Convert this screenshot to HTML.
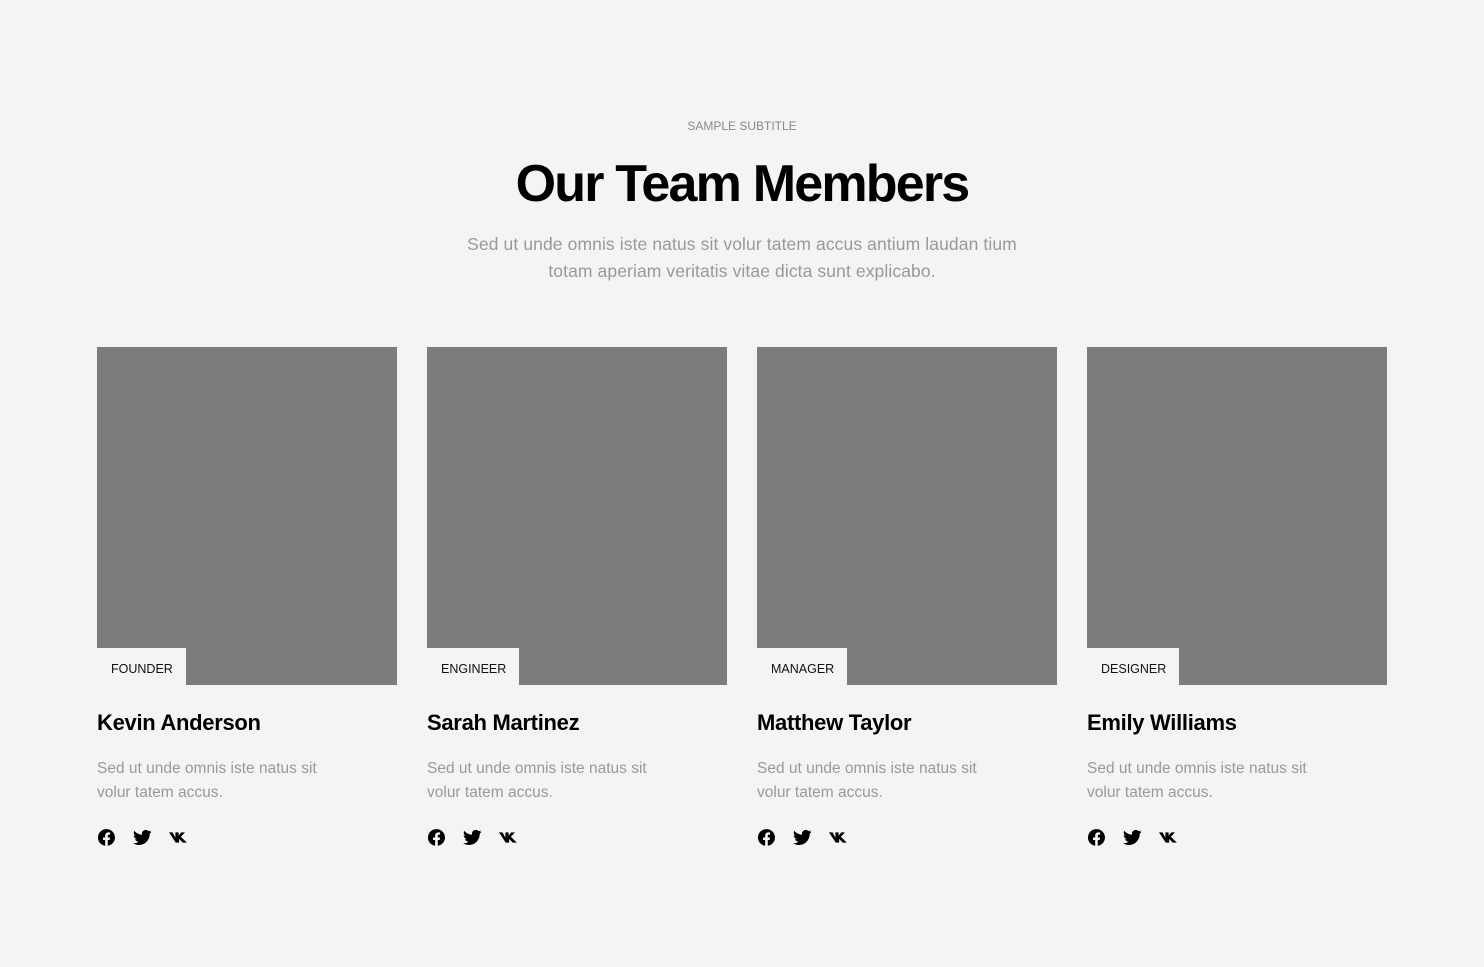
<!DOCTYPE html>
<html><head><meta charset="utf-8"><style>
*{margin:0;padding:0;box-sizing:border-box}
body{width:1484px;height:967px;background:#f4f4f4;font-family:"Liberation Sans",sans-serif;position:relative;overflow:hidden}
.sub{position:absolute;top:119px;left:0;width:1484px;text-align:center;font-size:12px;color:#888}
h1{position:absolute;top:152px;left:0;width:1484px;text-align:center;font-size:52px;font-weight:700;letter-spacing:-1.8px;color:#000;line-height:64px}
.lead{position:absolute;top:231px;left:0;width:1484px;text-align:center;font-size:17.5px;letter-spacing:0.1px;line-height:27px;color:#999}
.card{position:absolute;top:347px;width:300px}
.img{height:338px;background:#7c7c7d;position:relative}
.tag{position:absolute;left:0;bottom:0;height:37px;background:#f4f4f4;padding:0 13px 0 14px;font-size:12.5px;line-height:42px;color:#111}
.name{margin-top:24px;font-size:22px;font-weight:700;letter-spacing:-0.3px;color:#000;line-height:28px}
.desc{margin-top:20px;font-size:15.5px;line-height:24px;color:#999;width:250px}
.icons{margin-top:23px;display:flex;gap:17px}
.icons svg{width:19px;height:19px}
</style></head><body>
<div class="sub">SAMPLE SUBTITLE</div>
<h1>Our Team Members</h1>
<div class="lead">Sed ut unde omnis iste natus sit volur tatem accus antium laudan tium<br>totam aperiam veritatis vitae dicta sunt explicabo.</div>

<div class="card" style="left:97px"><div class="img"><div class="tag">FOUNDER</div></div><div class="name">Kevin Anderson</div><div class="desc">Sed ut unde omnis iste natus sit volur tatem accus.</div><div class="icons ic"></div></div>
<div class="card" style="left:427px"><div class="img"><div class="tag">ENGINEER</div></div><div class="name">Sarah Martinez</div><div class="desc">Sed ut unde omnis iste natus sit volur tatem accus.</div><div class="icons ic"></div></div>
<div class="card" style="left:757px"><div class="img"><div class="tag">MANAGER</div></div><div class="name">Matthew Taylor</div><div class="desc">Sed ut unde omnis iste natus sit volur tatem accus.</div><div class="icons ic"></div></div>
<div class="card" style="left:1087px"><div class="img"><div class="tag">DESIGNER</div></div><div class="name">Emily Williams</div><div class="desc">Sed ut unde omnis iste natus sit volur tatem accus.</div><div class="icons ic"></div></div>
<script>
var s='<svg viewBox="0 0 24 24"><path fill="#000" d="M12 1.5a10.5 10.5 0 0 0-1.7 20.9v-7.3H7.6V12h2.7V9.7c0-2.6 1.6-4.1 4-4.1 1.1 0 2.3.2 2.3.2v2.6h-1.3c-1.3 0-1.7.8-1.7 1.6V12h2.9l-.5 3.1h-2.4v7.3A10.5 10.5 0 0 0 12 1.5z"/></svg>'+
'<svg viewBox="0 0 24 24"><path fill="#000" d="M23.5 4.6c-.9.4-1.8.6-2.8.8 1-.6 1.7-1.5 2.1-2.6-.9.6-2 1-3.1 1.2a4.8 4.8 0 0 0-8.2 4.4C7.5 8.2 4 6.3 1.600 3.4a4.8 4.8 0 0 0 1.5 6.4c-.8 0-1.5-.2-2.2-.6 0 2.3 1.6 4.3 3.9 4.700-.7.2-1.5.2-2.2.1.6 1.9 2.4 3.3 4.5 3.3A9.6 9.6 0 0 1 0 19.3a13.6 13.6 0 0 0 7.4 2.2c8.9 0 13.7-7.4 13.7-13.7v-.6c.9-.7 1.7-1.5 2.4-2.600z"/></svg>'+
'<svg viewBox="0 0 24 24"><path fill="#000" d="M0 5.5h4.5l3.6 6.8V5.5h4v4.2l3.4-4.2h4.7l-5.2 5.6 7.5 7.4h-5.2l-4.5-4.8v4.8H8.5L0 5.5z"/></svg>';
document.querySelectorAll('.ic').forEach(function(e){e.innerHTML=s});
</script>
</body></html>
